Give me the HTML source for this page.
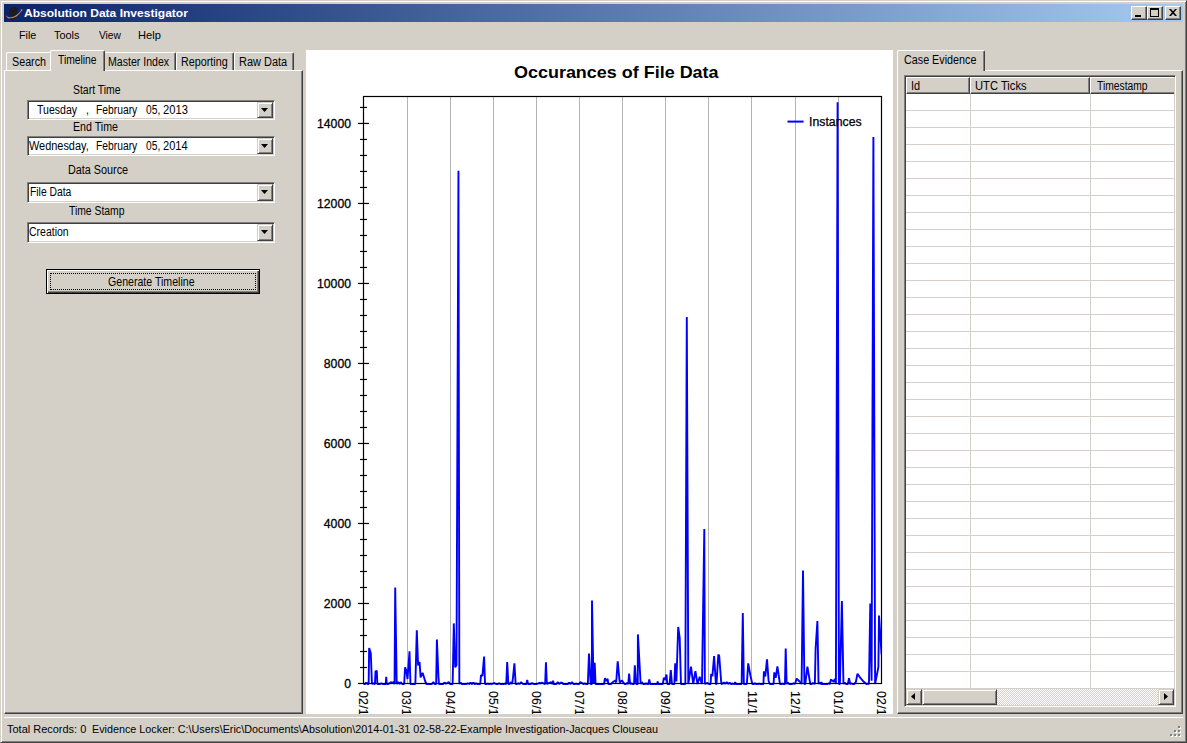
<!DOCTYPE html>
<html><head><meta charset="utf-8"><title>Absolution Data Investigator</title>
<style>
html,body{margin:0;padding:0;}
body{width:1187px;height:743px;position:relative;overflow:hidden;background:#d4d0c8;font-family:"Liberation Sans",sans-serif;font-size:11px;color:#000;}
.a{position:absolute;}
.t{position:absolute;white-space:pre;line-height:1;transform-origin:0 0;display:inline-block;}
.sunk{position:absolute;box-sizing:border-box;background:#fff;border:1px solid;border-color:#808080 #fff #fff #808080;box-shadow:inset 1px 1px 0 #404040,inset -1px -1px 0 #d4d0c8;}
.btnr{position:absolute;box-sizing:border-box;background:#d4d0c8;border:1px solid;border-color:#d4d0c8 #404040 #404040 #d4d0c8;box-shadow:inset 1px 1px 0 #fff,inset -1px -1px 0 #808080;}
.cap{position:absolute;box-sizing:border-box;background:#d4d0c8;border:1px solid;border-color:#fff #404040 #404040 #fff;box-shadow:inset -1px -1px 0 #808080;}
.tab{position:absolute;box-sizing:border-box;top:52px;height:18px;background:#d4d0c8;border-top:1px solid #fff;border-left:1px solid #fff;border-right:1px solid #404040;box-shadow:inset -1px 0 0 #808080;border-radius:2px 2px 0 0;}
.tabsel{top:50px;height:21px;z-index:2;}
.panel{position:absolute;box-sizing:border-box;background:#d4d0c8;border:1px solid;border-color:#fff #404040 #404040 #fff;box-shadow:inset -1px -1px 0 #808080;}
.arrow{position:absolute;width:0;height:0;border-left:4px solid transparent;border-right:4px solid transparent;border-top:4px solid #000;}
</style></head><body>

<div class="a" style="left:0;top:0;width:1187px;height:743px;box-sizing:border-box;border:1px solid;border-color:#d4d0c8 #404040 #404040 #d4d0c8;box-shadow:inset 1px 1px 0 #fff,inset -1px -1px 0 #808080;"></div>
<div class="a" style="left:4px;top:4px;width:1179px;height:18px;background:linear-gradient(to right,#0a246a,#a6caf0);"></div>
<svg class="a" style="left:4px;top:4px" width="20" height="18" viewBox="4 4 20 18"><path d="M9.2 12.2 L10 9.6 L12 7.6 L14.5 7 L17 7.4 L18.3 9 L17.6 12 L15.6 15 L13 16.6 L10.4 16 L9 14.4Z" fill="#1d1a24"/><path d="M5.8 15.2 Q8.6 18.2 12.6 17.1 Q17.4 15.4 21.2 10.2 L20 10 L22.4 9 L22 11.6 L21.6 10.8 Q17.8 16.8 12.8 18.5 Q7.6 19.6 5.8 15.2Z" fill="#ff7f27"/><path d="M9.4 17.9 Q11 18.6 13 18.1 Q14.6 17.6 16 16.6 L15.2 18.4 L13.4 19.8 L10.8 19.7Z" fill="#1d1a24"/></svg>
<div class="cap" style="left:1131px;top:6px;width:16px;height:14px"><div class="a" style="left:3px;top:8px;width:6px;height:2px;background:#000"></div></div>
<div class="cap" style="left:1147px;top:6px;width:16px;height:14px"><div class="a" style="left:2px;top:1px;width:9px;height:9px;box-sizing:border-box;border:1px solid #000;border-top-width:2px"></div></div>
<div class="cap" style="left:1165px;top:6px;width:16px;height:14px"><svg class="a" style="left:3px;top:2px" width="8" height="7" viewBox="0 0 8 7"><path d="M0 0h2l2 2.3L6 0h2L5 3.5 8 7H6L4 4.7 2 7H0l3-3.5z" fill="#000"/></svg></div>
<div class="panel" style="left:4px;top:70px;width:299px;height:644px"></div>
<div class="tab" style="left:6px;width:46px"></div>
<div class="tab" style="left:104px;width:72px"></div>
<div class="tab" style="left:176px;width:58px"></div>
<div class="tab" style="left:234px;width:60px"></div>
<div class="tab tabsel" style="left:50px;width:55px"></div>
<div class="sunk" style="left:27px;top:100px;width:248px;height:20px"><div class="btnr" style="right:1px;top:1px;width:16px;height:16px"><svg class="a" style="left:3px;top:5px" width="7" height="4"><path d="M0 0H7L3.5 4z" fill="#000"/></svg></div></div>
<div class="sunk" style="left:27px;top:136px;width:248px;height:20px"><div class="btnr" style="right:1px;top:1px;width:16px;height:16px"><svg class="a" style="left:3px;top:5px" width="7" height="4"><path d="M0 0H7L3.5 4z" fill="#000"/></svg></div></div>
<div class="sunk" style="left:27px;top:182px;width:248px;height:21px"><div class="btnr" style="right:1px;top:1px;width:16px;height:17px"><svg class="a" style="left:3px;top:5px" width="7" height="4"><path d="M0 0H7L3.5 4z" fill="#000"/></svg></div></div>
<div class="sunk" style="left:27px;top:222px;width:248px;height:21px"><div class="btnr" style="right:1px;top:1px;width:16px;height:17px"><svg class="a" style="left:3px;top:5px" width="7" height="4"><path d="M0 0H7L3.5 4z" fill="#000"/></svg></div></div>
<div class="a" style="left:46px;top:269px;width:214px;height:25px;box-sizing:border-box;border:1px solid #000;background:#d4d0c8;box-shadow:inset 1px 1px 0 #fff,inset -1px -1px 0 #404040,inset -2px -2px 0 #808080;"><div class="a" style="left:3px;top:3px;right:3px;bottom:3px;border:1px dotted #000"></div></div>
<svg width="587" height="664" viewBox="0 0 587 664" style="position:absolute;left:306px;top:50px;background:#fff;font-family:'Liberation Sans',sans-serif">
<defs><clipPath id="pc"><rect x="57.00" y="46.00" width="519.00" height="589.00"/></clipPath></defs>
<line x1="101.50" y1="46.50" x2="101.50" y2="633.50" stroke="#b4b4b4" stroke-width="1"/>
<line x1="144.50" y1="46.50" x2="144.50" y2="633.50" stroke="#b4b4b4" stroke-width="1"/>
<line x1="187.50" y1="46.50" x2="187.50" y2="633.50" stroke="#b4b4b4" stroke-width="1"/>
<line x1="230.50" y1="46.50" x2="230.50" y2="633.50" stroke="#b4b4b4" stroke-width="1"/>
<line x1="273.50" y1="46.50" x2="273.50" y2="633.50" stroke="#b4b4b4" stroke-width="1"/>
<line x1="316.50" y1="46.50" x2="316.50" y2="633.50" stroke="#b4b4b4" stroke-width="1"/>
<line x1="359.50" y1="46.50" x2="359.50" y2="633.50" stroke="#b4b4b4" stroke-width="1"/>
<line x1="402.50" y1="46.50" x2="402.50" y2="633.50" stroke="#b4b4b4" stroke-width="1"/>
<line x1="445.50" y1="46.50" x2="445.50" y2="633.50" stroke="#b4b4b4" stroke-width="1"/>
<line x1="489.50" y1="46.50" x2="489.50" y2="633.50" stroke="#b4b4b4" stroke-width="1"/>
<line x1="532.50" y1="46.50" x2="532.50" y2="633.50" stroke="#b4b4b4" stroke-width="1"/>
<polyline clip-path="url(#pc)" points="57.50,634.00 58.92,634.00 60.34,632.60 61.76,634.00 62.65,634.00 63.15,598.10 64.80,603.30 65.95,634.00 67.15,633.30 68.95,634.00 69.50,621.40 70.80,620.80 71.35,634.00 72.55,634.00 73.97,634.00 75.39,633.30 76.81,634.00 78.23,634.00 79.75,634.00 80.20,626.80 80.75,634.00 81.95,634.00 83.37,633.40 84.79,632.20 86.21,632.60 87.63,632.20 88.55,634.00 89.20,537.40 90.70,634.00 92.40,632.00 93.55,634.00 94.75,632.20 96.17,634.00 98.15,634.00 99.10,617.40 100.40,620.80 101.50,629.00 103.50,601.20 104.45,634.00 105.65,634.00 107.07,634.00 108.49,634.00 109.35,634.00 110.80,580.40 112.10,615.40 113.60,612.00 114.60,627.50 116.60,622.80 119.30,631.50 120.45,634.00 121.65,634.00 123.07,634.00 124.49,634.00 125.91,634.00 127.33,632.20 128.74,634.00 130.15,634.00 130.90,589.50 132.40,626.00 132.95,634.00 134.15,634.00 135.57,634.00 136.99,634.00 138.41,632.60 139.83,633.60 141.24,633.00 142.66,632.20 144.08,634.00 145.50,634.00 146.65,634.00 147.80,573.40 149.20,617.40 150.50,615.00 152.45,120.70 153.35,634.00 154.55,632.60 155.97,634.00 157.39,634.00 158.81,634.00 160.23,634.00 161.64,633.30 163.06,634.00 164.48,632.60 165.90,634.00 167.32,632.60 168.74,634.00 170.16,633.40 171.58,634.00 173.00,634.00 174.25,634.00 175.00,625.00 176.40,626.00 178.10,606.60 179.05,634.00 180.25,634.00 181.67,633.60 183.09,634.00 184.51,633.60 185.93,634.00 187.34,633.30 188.76,633.30 190.18,634.00 191.60,634.00 193.02,633.30 194.44,634.00 195.86,634.00 197.28,634.00 198.70,633.60 200.25,634.00 201.20,612.00 202.35,634.00 203.55,634.00 204.97,632.20 206.15,634.00 207.00,627.50 208.40,613.40 209.65,634.00 210.85,634.00 212.27,633.30 213.69,634.00 215.11,632.20 216.53,633.60 217.94,634.00 219.36,634.00 220.35,634.00 221.20,629.90 222.05,634.00 223.25,634.00 224.67,634.00 226.09,633.00 227.51,634.00 228.93,634.00 230.34,634.00 231.76,633.60 233.18,633.00 234.60,633.30 236.02,632.60 237.44,633.30 239.15,634.00 239.95,612.40 240.85,634.00 242.05,633.30 243.47,633.00 244.89,632.20 246.45,634.00 247.10,630.60 247.75,634.00 248.95,634.00 250.37,634.00 251.79,632.20 253.21,634.00 254.63,632.60 256.04,632.60 257.46,634.00 258.88,634.00 260.30,634.00 261.72,634.00 263.14,632.60 264.56,634.00 265.98,632.20 267.40,634.00 268.82,634.00 270.23,633.60 271.65,634.00 273.07,634.00 274.49,632.20 275.91,633.00 277.33,634.00 278.75,633.40 280.17,634.00 281.85,634.00 283.00,603.50 284.70,634.00 285.85,634.00 286.00,550.50 287.50,634.00 288.70,612.70 289.55,634.00 290.75,634.00 292.17,634.00 293.59,634.00 295.01,634.00 296.43,634.00 298.05,634.00 298.90,628.20 300.30,631.00 301.60,628.80 302.35,634.00 303.55,634.00 304.97,634.00 306.60,632.30 309.30,630.50 310.20,632.50 311.70,611.30 313.70,632.50 316.00,630.50 318.55,634.00 319.75,634.00 321.17,633.00 322.25,634.00 323.10,623.70 324.15,634.00 325.35,633.40 326.77,634.00 328.05,634.00 328.80,615.40 330.20,634.00 331.75,634.00 331.90,584.40 334.65,634.00 335.85,632.20 337.27,634.00 338.69,634.00 340.11,633.40 341.53,634.00 342.45,634.00 343.30,629.50 344.15,634.00 345.35,634.00 346.77,634.00 348.19,634.00 349.61,634.00 351.25,634.00 351.70,631.30 352.15,634.00 353.35,634.00 354.77,634.00 356.85,634.00 357.80,627.80 359.10,629.80 360.50,624.50 361.25,634.00 362.45,634.00 363.55,634.00 364.80,620.10 365.95,634.00 367.15,634.00 368.35,634.00 369.20,613.40 370.40,631.50 372.20,577.00 373.70,587.80 374.95,634.00 376.15,634.00 377.57,634.00 379.35,634.00 380.80,267.10 382.30,634.00 385.00,616.70 387.20,634.00 389.40,621.20 391.50,634.00 393.70,626.80 395.40,632.50 396.00,634.00 398.30,479.10 398.85,634.00 400.05,633.40 401.47,633.00 402.89,634.00 404.65,634.00 405.10,624.10 406.40,626.20 408.10,606.00 409.90,634.00 410.50,634.00 412.30,604.60 413.20,605.80 415.35,634.00 416.55,633.60 417.97,632.60 419.39,633.60 420.81,632.20 422.23,634.00 423.64,632.60 425.06,634.00 426.48,633.60 428.65,634.00 429.20,632.00 429.75,634.00 430.95,634.00 432.37,634.00 433.79,634.00 435.65,634.00 436.80,562.90 437.85,634.00 439.05,634.00 440.85,634.00 442.20,613.40 444.50,626.00 446.35,634.00 447.55,634.00 448.97,633.40 450.39,634.00 451.81,634.00 453.23,633.60 454.64,634.00 456.06,634.00 457.45,634.00 457.90,621.40 459.30,626.50 461.00,609.30 462.60,631.00 463.85,634.00 465.05,634.00 466.47,634.00 467.55,634.00 468.30,622.40 469.70,627.80 471.40,616.30 473.95,634.00 475.15,634.00 476.57,633.60 477.99,634.00 478.95,634.00 479.70,598.50 480.65,634.00 481.85,632.60 483.27,634.00 484.69,634.00 486.11,634.00 487.53,633.30 489.05,634.00 490.60,628.60 493.60,631.50 495.60,634.00 497.00,520.60 498.40,634.00 499.30,634.00 501.40,616.70 504.25,634.00 505.45,634.00 506.87,633.00 508.85,634.00 509.60,599.00 511.40,571.00 512.55,634.00 513.75,632.60 515.15,634.00 515.50,632.00 515.85,634.00 517.05,634.00 518.47,634.00 519.89,634.00 521.31,634.00 522.73,633.30 523.85,634.00 524.90,629.50 527.60,631.80 528.90,628.80 529.90,634.00 531.60,52.30 532.90,634.00 533.90,634.00 535.90,551.00 537.45,634.00 538.65,632.60 540.07,634.00 541.85,634.00 543.00,628.20 544.15,634.00 545.35,633.30 546.77,634.00 548.19,634.00 549.80,632.20 551.50,623.70 554.50,628.20 557.80,631.80 560.35,634.00 561.55,633.60 562.95,634.00 564.30,553.50 565.60,630.80 567.40,87.10 569.10,634.00 572.40,617.00 573.00,565.60 575.60,604.60" fill="none" stroke="#0000ff" stroke-width="1.9" stroke-linejoin="bevel"/>
<line x1="52.00" y1="633.50" x2="63.00" y2="633.50" stroke="#000" stroke-width="1.2"/>
<line x1="54.00" y1="617.50" x2="61.00" y2="617.50" stroke="#000" stroke-width="1.2"/>
<line x1="54.00" y1="601.50" x2="61.00" y2="601.50" stroke="#000" stroke-width="1.2"/>
<line x1="54.00" y1="585.50" x2="61.00" y2="585.50" stroke="#000" stroke-width="1.2"/>
<line x1="54.00" y1="569.49" x2="61.00" y2="569.49" stroke="#000" stroke-width="1.2"/>
<line x1="52.00" y1="553.49" x2="63.00" y2="553.49" stroke="#000" stroke-width="1.2"/>
<line x1="54.00" y1="537.49" x2="61.00" y2="537.49" stroke="#000" stroke-width="1.2"/>
<line x1="54.00" y1="521.49" x2="61.00" y2="521.49" stroke="#000" stroke-width="1.2"/>
<line x1="54.00" y1="505.49" x2="61.00" y2="505.49" stroke="#000" stroke-width="1.2"/>
<line x1="54.00" y1="489.49" x2="61.00" y2="489.49" stroke="#000" stroke-width="1.2"/>
<line x1="52.00" y1="473.49" x2="63.00" y2="473.49" stroke="#000" stroke-width="1.2"/>
<line x1="54.00" y1="457.48" x2="61.00" y2="457.48" stroke="#000" stroke-width="1.2"/>
<line x1="54.00" y1="441.48" x2="61.00" y2="441.48" stroke="#000" stroke-width="1.2"/>
<line x1="54.00" y1="425.48" x2="61.00" y2="425.48" stroke="#000" stroke-width="1.2"/>
<line x1="54.00" y1="409.48" x2="61.00" y2="409.48" stroke="#000" stroke-width="1.2"/>
<line x1="52.00" y1="393.48" x2="63.00" y2="393.48" stroke="#000" stroke-width="1.2"/>
<line x1="54.00" y1="377.48" x2="61.00" y2="377.48" stroke="#000" stroke-width="1.2"/>
<line x1="54.00" y1="361.48" x2="61.00" y2="361.48" stroke="#000" stroke-width="1.2"/>
<line x1="54.00" y1="345.47" x2="61.00" y2="345.47" stroke="#000" stroke-width="1.2"/>
<line x1="54.00" y1="329.47" x2="61.00" y2="329.47" stroke="#000" stroke-width="1.2"/>
<line x1="52.00" y1="313.47" x2="63.00" y2="313.47" stroke="#000" stroke-width="1.2"/>
<line x1="54.00" y1="297.47" x2="61.00" y2="297.47" stroke="#000" stroke-width="1.2"/>
<line x1="54.00" y1="281.47" x2="61.00" y2="281.47" stroke="#000" stroke-width="1.2"/>
<line x1="54.00" y1="265.47" x2="61.00" y2="265.47" stroke="#000" stroke-width="1.2"/>
<line x1="54.00" y1="249.47" x2="61.00" y2="249.47" stroke="#000" stroke-width="1.2"/>
<line x1="52.00" y1="233.46" x2="63.00" y2="233.46" stroke="#000" stroke-width="1.2"/>
<line x1="54.00" y1="217.46" x2="61.00" y2="217.46" stroke="#000" stroke-width="1.2"/>
<line x1="54.00" y1="201.46" x2="61.00" y2="201.46" stroke="#000" stroke-width="1.2"/>
<line x1="54.00" y1="185.46" x2="61.00" y2="185.46" stroke="#000" stroke-width="1.2"/>
<line x1="54.00" y1="169.46" x2="61.00" y2="169.46" stroke="#000" stroke-width="1.2"/>
<line x1="52.00" y1="153.46" x2="63.00" y2="153.46" stroke="#000" stroke-width="1.2"/>
<line x1="54.00" y1="137.46" x2="61.00" y2="137.46" stroke="#000" stroke-width="1.2"/>
<line x1="54.00" y1="121.45" x2="61.00" y2="121.45" stroke="#000" stroke-width="1.2"/>
<line x1="54.00" y1="105.45" x2="61.00" y2="105.45" stroke="#000" stroke-width="1.2"/>
<line x1="54.00" y1="89.45" x2="61.00" y2="89.45" stroke="#000" stroke-width="1.2"/>
<line x1="52.00" y1="73.45" x2="63.00" y2="73.45" stroke="#000" stroke-width="1.2"/>
<line x1="54.00" y1="57.45" x2="61.00" y2="57.45" stroke="#000" stroke-width="1.2"/>
<rect x="57.50" y="46.50" width="518.00" height="587.00" fill="none" stroke="#000" stroke-width="1.2"/>
<text x="45.0" y="638.1" text-anchor="end" font-size="12.3" fill="#000" stroke="#000" stroke-width="0.3" textLength="6.8" lengthAdjust="spacingAndGlyphs">0</text>
<text x="45.0" y="558.1" text-anchor="end" font-size="12.3" fill="#000" stroke="#000" stroke-width="0.3" textLength="27.2" lengthAdjust="spacingAndGlyphs">2000</text>
<text x="45.0" y="478.1" text-anchor="end" font-size="12.3" fill="#000" stroke="#000" stroke-width="0.3" textLength="27.2" lengthAdjust="spacingAndGlyphs">4000</text>
<text x="45.0" y="398.1" text-anchor="end" font-size="12.3" fill="#000" stroke="#000" stroke-width="0.3" textLength="27.2" lengthAdjust="spacingAndGlyphs">6000</text>
<text x="45.0" y="318.1" text-anchor="end" font-size="12.3" fill="#000" stroke="#000" stroke-width="0.3" textLength="27.2" lengthAdjust="spacingAndGlyphs">8000</text>
<text x="45.0" y="238.1" text-anchor="end" font-size="12.3" fill="#000" stroke="#000" stroke-width="0.3" textLength="34.0" lengthAdjust="spacingAndGlyphs">10000</text>
<text x="45.0" y="158.1" text-anchor="end" font-size="12.3" fill="#000" stroke="#000" stroke-width="0.3" textLength="34.0" lengthAdjust="spacingAndGlyphs">12000</text>
<text x="45.0" y="78.1" text-anchor="end" font-size="12.3" fill="#000" stroke="#000" stroke-width="0.3" textLength="34.0" lengthAdjust="spacingAndGlyphs">14000</text>
<text transform="translate(53.20,641.00) rotate(90)" font-size="12.3" letter-spacing="0.25" fill="#000" stroke="#000" stroke-width="0.15">02/13</text>
<text transform="translate(96.37,641.00) rotate(90)" font-size="12.3" letter-spacing="0.25" fill="#000" stroke="#000" stroke-width="0.15">03/13</text>
<text transform="translate(139.53,641.00) rotate(90)" font-size="12.3" letter-spacing="0.25" fill="#000" stroke="#000" stroke-width="0.15">04/13</text>
<text transform="translate(182.70,641.00) rotate(90)" font-size="12.3" letter-spacing="0.25" fill="#000" stroke="#000" stroke-width="0.15">05/13</text>
<text transform="translate(225.87,641.00) rotate(90)" font-size="12.3" letter-spacing="0.25" fill="#000" stroke="#000" stroke-width="0.15">06/13</text>
<text transform="translate(269.03,641.00) rotate(90)" font-size="12.3" letter-spacing="0.25" fill="#000" stroke="#000" stroke-width="0.15">07/13</text>
<text transform="translate(312.20,641.00) rotate(90)" font-size="12.3" letter-spacing="0.25" fill="#000" stroke="#000" stroke-width="0.15">08/13</text>
<text transform="translate(355.37,641.00) rotate(90)" font-size="12.3" letter-spacing="0.25" fill="#000" stroke="#000" stroke-width="0.15">09/13</text>
<text transform="translate(398.53,641.00) rotate(90)" font-size="12.3" letter-spacing="0.25" fill="#000" stroke="#000" stroke-width="0.15">10/13</text>
<text transform="translate(441.70,641.00) rotate(90)" font-size="12.3" letter-spacing="0.25" fill="#000" stroke="#000" stroke-width="0.15">11/13</text>
<text transform="translate(484.87,641.00) rotate(90)" font-size="12.3" letter-spacing="0.25" fill="#000" stroke="#000" stroke-width="0.15">12/13</text>
<text transform="translate(528.03,641.00) rotate(90)" font-size="12.3" letter-spacing="0.25" fill="#000" stroke="#000" stroke-width="0.15">01/14</text>
<text transform="translate(571.20,641.00) rotate(90)" font-size="12.3" letter-spacing="0.25" fill="#000" stroke="#000" stroke-width="0.15">02/14</text>
<text id="ctitle" x="310.3" y="28.3" text-anchor="middle" font-size="16.5" font-weight="bold" fill="#000" textLength="204.6" lengthAdjust="spacingAndGlyphs">Occurances of File Data</text>
<line x1="481.5" y1="71.6" x2="497.6" y2="71.6" stroke="#0000ff" stroke-width="2"/>
<text x="503.1" y="75.5" font-size="12.3" fill="#000" stroke="#000" stroke-width="0.25" textLength="52.5" lengthAdjust="spacingAndGlyphs">Instances</text>
</svg>
<div class="panel" style="left:897px;top:70px;width:286px;height:644px"></div>
<div class="tab tabsel" style="left:897px;width:88px"></div>
<div class="a" style="left:904px;top:75px;width:272px;height:632px;box-sizing:border-box;background:#fff;border:1px solid;border-color:#808080 #fff #fff #808080;box-shadow:inset 1px 1px 0 #404040,inset -1px -1px 0 #d4d0c8;"></div>
<div class="a" style="left:906px;top:94px;width:268px;height:595px;background:repeating-linear-gradient(to bottom,#fff 0,#fff 16px,#d4d0c8 16px,#d4d0c8 17px);"></div>
<div class="a" style="left:970px;top:94px;width:1px;height:595px;background:#d4d0c8"></div>
<div class="a" style="left:1090px;top:94px;width:1px;height:595px;background:#d4d0c8"></div>
<div class="a" style="left:906px;top:77px;width:64px;height:17px;box-sizing:border-box;background:#d4d0c8;border:1px solid;border-color:#fff #404040 #404040 #fff;box-shadow:inset -1px -1px 0 #808080"></div>
<div class="a" style="left:970px;top:77px;width:120px;height:17px;box-sizing:border-box;background:#d4d0c8;border:1px solid;border-color:#fff #404040 #404040 #fff;box-shadow:inset -1px -1px 0 #808080"></div>
<div class="a" style="left:1090px;top:77px;width:84px;height:17px;box-sizing:border-box;background:#d4d0c8;border:1px solid;border-color:#fff #404040 #404040 #fff;border-right:none;box-shadow:inset 0 -1px 0 #808080"></div>
<div class="a" style="left:906px;top:689px;width:268px;height:16px;background:#eae8e3;background-image:repeating-conic-gradient(#fff 0 25%,#d4d0c8 0 50%);background-size:2px 2px;"></div>
<div class="btnr" style="left:906px;top:689px;width:16px;height:16px"><svg class="a" style="left:4px;top:3px" width="4" height="7"><path d="M4 0L0 3.5L4 7z" fill="#000"/></svg></div>
<div class="btnr" style="left:922px;top:689px;width:75px;height:16px"></div>
<div class="btnr" style="left:1158px;top:689px;width:16px;height:16px"><svg class="a" style="left:5px;top:3px" width="4" height="7"><path d="M0 0L4 3.5L0 7z" fill="#000"/></svg></div>
<div class="a" style="left:4px;top:717px;width:1179px;height:1px;background:#fff"></div>
<div class="a" style="left:1178px;top:726px;width:2px;height:2px;background:#808080;box-shadow:1px 1px 0 #fff"></div><div class="a" style="left:1174px;top:730px;width:2px;height:2px;background:#808080;box-shadow:1px 1px 0 #fff"></div><div class="a" style="left:1178px;top:730px;width:2px;height:2px;background:#808080;box-shadow:1px 1px 0 #fff"></div><div class="a" style="left:1170px;top:734px;width:2px;height:2px;background:#808080;box-shadow:1px 1px 0 #fff"></div><div class="a" style="left:1174px;top:734px;width:2px;height:2px;background:#808080;box-shadow:1px 1px 0 #fff"></div><div class="a" style="left:1178px;top:734px;width:2px;height:2px;background:#808080;box-shadow:1px 1px 0 #fff"></div>
<span class="t" id="ttl" style="left:24.33px;top:8.39px;font-size:11px;color:#fff;font-weight:bold;transform:scaleX(1.0947);">Absolution Data Investigator</span>
<span class="t" id="m1" style="left:18.52px;top:30.39px;font-size:11px;color:#000;transform:scaleX(0.9786);">File</span>
<span class="t" id="m2" style="left:54.10px;top:30.39px;font-size:11px;color:#000;transform:scaleX(0.9901);">Tools</span>
<span class="t" id="m3" style="left:98.55px;top:30.39px;font-size:11px;color:#000;transform:scaleX(0.9260);">View</span>
<span class="t" id="m4" style="left:138.09px;top:30.39px;font-size:11px;color:#000;transform:scaleX(1.0094);">Help</span>
<span class="t" id="t1" style="left:11.55px;top:55.64px;font-size:12px;color:#000;transform:scaleX(0.8952);z-index:3;">Search</span>
<span class="t" id="t2" style="left:57.89px;top:54.34px;font-size:12px;color:#000;transform:scaleX(0.8584);z-index:3;">Timeline</span>
<span class="t" id="t3" style="left:108.46px;top:55.64px;font-size:12px;color:#000;transform:scaleX(0.8814);z-index:3;">Master Index</span>
<span class="t" id="t4" style="left:181.45px;top:55.64px;font-size:12px;color:#000;transform:scaleX(0.8986);z-index:3;">Reporting</span>
<span class="t" id="t5" style="left:239.43px;top:55.64px;font-size:12px;color:#000;transform:scaleX(0.9140);z-index:3;">Raw Data</span>
<span class="t" id="l1" style="left:72.86px;top:83.54px;font-size:12px;color:#000;transform:scaleX(0.8705);">Start Time</span>
<span class="t" id="l2" style="left:72.86px;top:121.44px;font-size:12px;color:#000;transform:scaleX(0.8862);">End Time</span>
<span class="t" id="l3" style="left:67.84px;top:164.44px;font-size:12px;color:#000;transform:scaleX(0.9011);">Data Source</span>
<span class="t" id="l4" style="left:69.38px;top:204.54px;font-size:12px;color:#000;transform:scaleX(0.8630);">Time Stamp</span>
<span class="t" id="d1a" style="left:37.48px;top:103.74px;font-size:12px;color:#000;transform:scaleX(0.8776);">Tuesday</span>
<span class="t" id="d1b" style="left:86.09px;top:103.74px;font-size:12px;color:#000;transform:scaleX(0.8700);">,</span>
<span class="t" id="d1c" style="left:96.28px;top:103.74px;font-size:12px;color:#000;transform:scaleX(0.8587);">February</span>
<span class="t" id="d1d" style="left:146.02px;top:103.74px;font-size:12px;color:#000;transform:scaleX(0.8553);">05,</span>
<span class="t" id="d1e" style="left:163.24px;top:103.74px;font-size:12px;color:#000;transform:scaleX(0.9315);">2013</span>
<span class="t" id="d2a" style="left:29.45px;top:139.74px;font-size:12px;color:#000;transform:scaleX(0.9101);">Wednesday,</span>
<span class="t" id="d2c" style="left:96.28px;top:139.74px;font-size:12px;color:#000;transform:scaleX(0.8587);">February</span>
<span class="t" id="d2d" style="left:146.02px;top:139.74px;font-size:12px;color:#000;transform:scaleX(0.8553);">05,</span>
<span class="t" id="d2e" style="left:163.25px;top:139.74px;font-size:12px;color:#000;transform:scaleX(0.9243);">2014</span>
<span class="t" id="c1" style="left:29.68px;top:186.44px;font-size:12px;color:#000;transform:scaleX(0.8599);">File Data</span>
<span class="t" id="c2" style="left:29.28px;top:226.44px;font-size:12px;color:#000;transform:scaleX(0.8750);">Creation</span>
<span class="t" id="btn" style="left:107.87px;top:276.44px;font-size:12px;color:#000;transform:scaleX(0.8829);">Generate Timeline</span>
<span class="t" id="rt" style="left:903.96px;top:54.44px;font-size:12px;color:#000;transform:scaleX(0.8970);z-index:3;">Case Evidence</span>
<span class="t" id="h1" style="left:911.20px;top:80.24px;font-size:12px;color:#000;transform:scaleX(0.9080);">Id</span>
<span class="t" id="h2" style="left:975.36px;top:80.24px;font-size:12px;color:#000;transform:scaleX(0.9325);">UTC Ticks</span>
<span class="t" id="h3" style="left:1096.69px;top:80.24px;font-size:12px;color:#000;transform:scaleX(0.8591);">Timestamp</span>
<span class="t" id="s1" style="left:7.10px;top:724.39px;font-size:11px;color:#000;transform:scaleX(0.9968);">Total Records: 0</span>
<span class="t" id="s2" style="left:92.32px;top:724.39px;font-size:11px;color:#000;transform:scaleX(0.9805);">Evidence Locker: C:\Users\Eric\Documents\Absolution\2014-01-31 02-58-22-Example Investigation-Jacques Clouseau</span>
</body></html>
